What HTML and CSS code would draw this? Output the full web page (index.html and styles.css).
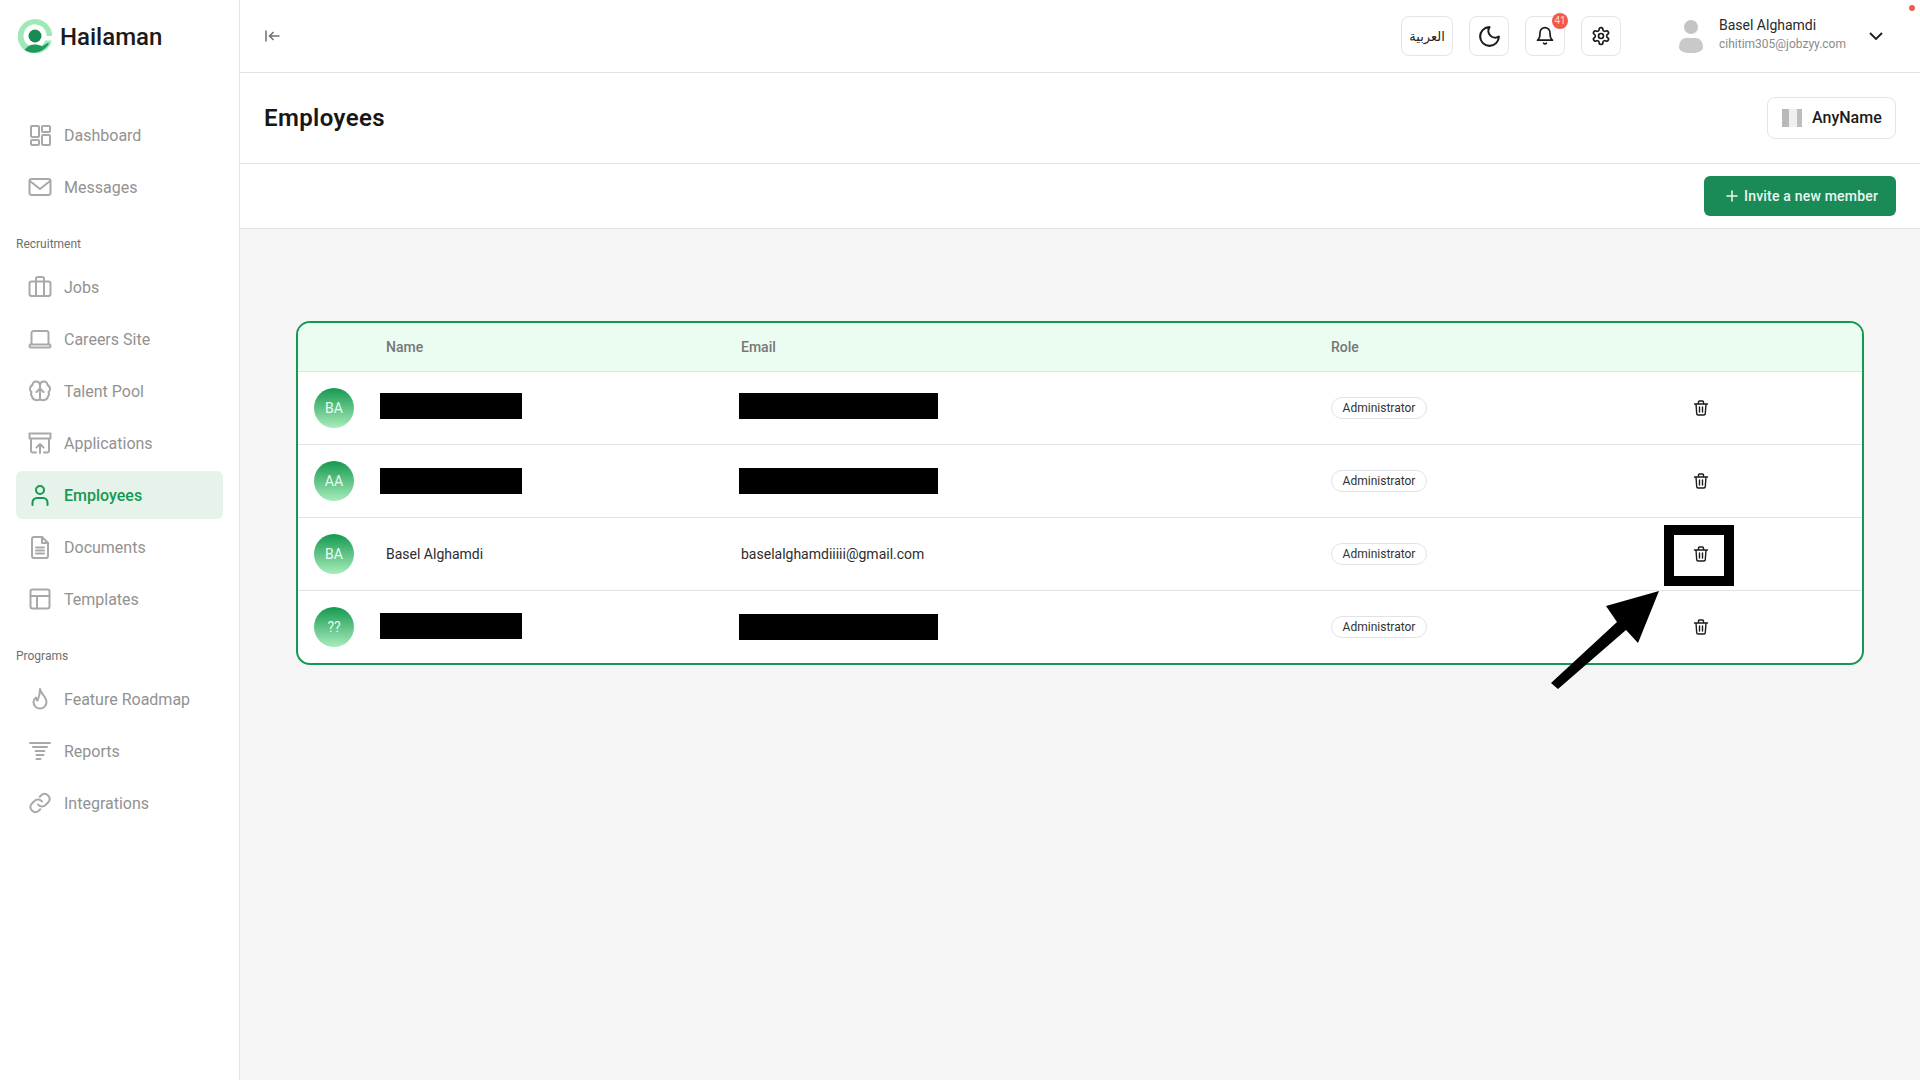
FILE: index.html
```html
<!DOCTYPE html>
<html lang="en">
<head>
<meta charset="utf-8">
<title>Employees</title>
<link rel="stylesheet" href="styles.css">
</head>
<body>
<div class="app">
  <aside class="sidebar">
    <div class="brand">
      <svg class="brand-mark" viewBox="0 0 34 34">
        <path d="M33.800 21.500A17.300 17.300 0 1 1 34.300 17h-5.800A11.500 11.500 0 1 0 27.500 21.500Z" fill="#9fe8b8"/>
        <path d="M6.500 31C10 26.500 13 25.500 17 25.500c2.500 0 5 .6 7 2l5.500-3.500c.5 0 1 .2 1.500.4A17.300 17.300 0 0 1 6.500 31Z" fill="#1f9a5b"/>
        <circle cx="17" cy="17" r="6.500" fill="#1a8a55"/>
      </svg>
      <span class="brand-name">Hailaman</span>
    </div>
    <nav class="nav">
      <a class="nav-item"><svg class="nav-icon" viewBox="0 0 24 24"><rect x="3" y="3" width="8" height="11" rx="1"/><rect x="14" y="3" width="8" height="6" rx="1"/><rect x="14" y="12" width="8" height="10" rx="1"/><rect x="3" y="17" width="8" height="5" rx="1"/></svg>Dashboard</a>
      <a class="nav-item"><svg class="nav-icon" viewBox="0 0 24 24"><rect x="1.500" y="4" width="21" height="16" rx="2"/><path d="m2 6 10 8 10-8"/></svg>Messages</a>
      <div class="nav-label">Recruitment</div>
      <a class="nav-item"><svg class="nav-icon" viewBox="0 0 24 24"><rect x="1.500" y="6.500" width="21" height="14.500" rx="2"/><path d="M8 21V4a2 2 0 0 1 2-2h4a2 2 0 0 1 2 2v17"/></svg>Jobs</a>
      <a class="nav-item"><svg class="nav-icon" viewBox="0 0 24 24"><path d="M3.500 17V6a2 2 0 0 1 2-2h13a2 2 0 0 1 2 2v11"/><path d="M2 17.500h20l.5 2a1 1 0 0 1-1 1h-19a1 1 0 0 1-1-1z"/></svg>Careers Site</a>
      <a class="nav-item"><svg class="nav-icon" viewBox="0 0 24 24"><path d="M12 6V21M12 6a4 4 0 0 0-4-3.500A3.500 3.500 0 0 0 4.500 6 4.500 4.500 0 0 0 2 10c0 1.500.7 2.500 1.500 3A4 4 0 0 0 4 17.500 4.500 4.500 0 0 0 8 21c2 .5 4-.5 4-1.500"/><path d="M12 6a4 4 0 0 1 4-3.500A3.500 3.500 0 0 1 19.500 6 4.500 4.500 0 0 1 22 10c0 1.500-.7 2.500-1.500 3a4 4 0 0 1-.5 4.500 4.500 4.500 0 0 1-4 3.500c-2 .5-4-.5-4-1.500"/><path d="m8.500 13 3.500-3.500 3.500 3.500"/></svg>Talent Pool</a>
      <a class="nav-item"><svg class="nav-icon" viewBox="0 0 24 24"><rect x="1.500" y="2.500" width="21" height="5"/><path d="M8 21.500H5a2 2 0 0 1-2-2V8m18 0v11.500a2 2 0 0 1-2 2h-3M12 22v-9m-3.500 3.500L12 13l3.500 3.500"/></svg>Applications</a>
      <a class="nav-item is-active"><svg class="nav-icon" viewBox="0 0 24 24"><circle cx="12" cy="7" r="4"/><path d="M4.500 22v-2.500a4.500 4.500 0 0 1 4.500-4.500h6a4.500 4.500 0 0 1 4.500 4.500V22"/></svg>Employees</a>
      <a class="nav-item"><svg class="nav-icon" viewBox="0 0 24 24"><path d="M14 2H6a2 2 0 0 0-2 2v17a2 2 0 0 0 2 2h12a2 2 0 0 0 2-2V8z"/><path d="M14 2v6h6M8 12.500h8M8 15.500h8M8 18.500h8"/></svg>Documents</a>
      <a class="nav-item"><svg class="nav-icon" viewBox="0 0 24 24"><rect x="2.500" y="2.500" width="19" height="19" rx="2"/><path d="M2.500 9h19M9 9v12.500"/></svg>Templates</a>
      <div class="nav-label">Programs</div>
      <a class="nav-item"><svg class="nav-icon" viewBox="0 0 24 24"><path d="M12 2c.5 3 2 4.500 4 7 1.500 2 2.500 4 2.500 6a6.500 6.500 0 0 1-13 0c0-2 1-3.500 2.500-4.500 0 1.500.5 2.500 1.500 3 1-2 2.500-6 2.500-11.500z"/></svg>Feature Roadmap</a>
      <a class="nav-item"><svg class="nav-icon" viewBox="0 0 24 24"><path d="M2 4h20M5 8h14M7.500 12h9M8.500 16h7M8.500 20h4"/></svg>Reports</a>
      <a class="nav-item"><svg class="nav-icon" viewBox="0 0 24 24"><path d="M10 13.500a5 5 0 0 0 7.500.5l3-3a5 5 0 0 0-7-7l-1.700 1.700"/><path d="M14 10.500a5 5 0 0 0-7.500-.5l-3 3a5 5 0 0 0 7 7l1.700-1.700"/></svg>Integrations</a>
    </nav>
  </aside>
  <main class="main">
    <header class="topbar">
      <svg class="collapse" viewBox="0 0 15 12"><path d="M1 .5v11M14.500 6H4.500M8.500 2 4.500 6l4 4"/></svg>
      <div class="top-actions">
        <button class="icon-btn lang">العربية</button>
        <button class="icon-btn"><svg class="top-icon large" viewBox="0 0 24 24"><path d="M12 3a6.500 6.500 0 0 0 9 9 9 9 0 1 1-9-9Z"/></svg></button>
        <button class="icon-btn"><svg class="top-icon" viewBox="0 0 24 24"><path d="M6 8a6 6 0 0 1 12 0c0 7 3 9 3 9H3s3-2 3-9"/><path d="M10.300 20.500a2 2 0 0 0 3.400 0"/></svg><span class="count">41</span></button>
        <button class="icon-btn"><svg class="top-icon" viewBox="0 0 24 24"><path d="M12.220 2h-.44a2 2 0 0 0-2 2v.18a2 2 0 0 1-1 1.730l-.43.250a2 2 0 0 1-2 0l-.15-.080a2 2 0 0 0-2.730.730l-.22.380a2 2 0 0 0 .730 2.730l.150.100a2 2 0 0 1 1 1.720v.510a2 2 0 0 1-1 1.740l-.150.090a2 2 0 0 0-.730 2.730l.22.380a2 2 0 0 0 2.730.730l.150-.080a2 2 0 0 1 2 0l.43.250a2 2 0 0 1 1 1.730V20a2 2 0 0 0 2 2h.44a2 2 0 0 0 2-2v-.18a2 2 0 0 1 1-1.730l.43-.250a2 2 0 0 1 2 0l.15.080a2 2 0 0 0 2.730-.730l.22-.390a2 2 0 0 0-.730-2.730l-.150-.080a2 2 0 0 1-1-1.740v-.5a2 2 0 0 1 1-1.740l.150-.090a2 2 0 0 0 .730-2.730l-.22-.380a2 2 0 0 0-2.730-.730l-.150.080a2 2 0 0 1-2 0l-.43-.250a2 2 0 0 1-1-1.730V4a2 2 0 0 0-2-2z"/><circle cx="12" cy="12" r="3"/></svg></button>
      </div>
      <div class="user">
        <svg class="user-pic" viewBox="0 0 24 33"><circle cx="12" cy="7" r="7" fill="#c4c4c4"/><path d="M0 27c0-5 3-9 7-9h10c4 0 7 4 7 9 0 4-5 6-12 6S0 31 0 27Z" fill="#c9c9c9"/></svg>
        <div class="user-text">
          <div class="user-name">Basel Alghamdi</div>
          <div class="user-mail">cihitim305@jobzyy.com</div>
        </div>
        <svg class="chevron" viewBox="0 0 14 8"><path d="m1 1 6 6 6-6"/></svg>
      </div>
      <span class="rec-dot"></span>
    </header>
    <section class="title-row">
      <h1 class="title">Employees</h1>
      <button class="org-btn"><span class="org-thumb"></span>AnyName</button>
    </section>
    <section class="action-row">
      <button class="invite"><svg class="plus" viewBox="0 0 12 12"><path d="M6 .5v11M.5 6h11"/></svg>Invite a new member</button>
    </section>
    <section class="content">
      <div class="card">
        <div class="row head">
          <div></div><div>Name</div><div>Email</div><div>Role</div><div></div>
        </div>
        <div class="row">
          <div class="avatar">BA</div>
          <div><div class="redact redact-name up-2"></div></div>
          <div><div class="redact redact-mail up-2"></div></div>
          <div><span class="role">Administrator</span></div>
          <div><svg class="trash" viewBox="0 0 16 16"><path d="M1.500 4h13M3 4l.7 9.500a1.500 1.500 0 0 0 1.500 1.500h5.600a1.500 1.500 0 0 0 1.500-1.500L13 4M5.500 4V2a1 1 0 0 1 1-1h3a1 1 0 0 1 1 1v2M6.500 7v5M9.500 7v5"/></svg></div>
        </div>
        <div class="row">
          <div class="avatar">AA</div>
          <div><div class="redact redact-name"></div></div>
          <div><div class="redact redact-mail"></div></div>
          <div><span class="role">Administrator</span></div>
          <div><svg class="trash" viewBox="0 0 16 16"><path d="M1.500 4h13M3 4l.7 9.500a1.500 1.500 0 0 0 1.500 1.500h5.600a1.500 1.500 0 0 0 1.500-1.500L13 4M5.500 4V2a1 1 0 0 1 1-1h3a1 1 0 0 1 1 1v2M6.500 7v5M9.500 7v5"/></svg></div>
        </div>
        <div class="row">
          <div class="avatar">BA</div>
          <div>Basel Alghamdi</div>
          <div>baselalghamdiiiii@gmail.com</div>
          <div><span class="role">Administrator</span></div>
          <div><svg class="trash" viewBox="0 0 16 16"><path d="M1.500 4h13M3 4l.7 9.500a1.500 1.500 0 0 0 1.500 1.500h5.600a1.500 1.500 0 0 0 1.500-1.500L13 4M5.500 4V2a1 1 0 0 1 1-1h3a1 1 0 0 1 1 1v2M6.500 7v5M9.500 7v5"/></svg></div>
        </div>
        <div class="row">
          <div class="avatar">??</div>
          <div><div class="redact redact-name up-1"></div></div>
          <div><div class="redact redact-mail"></div></div>
          <div><span class="role">Administrator</span></div>
          <div><svg class="trash" viewBox="0 0 16 16"><path d="M1.500 4h13M3 4l.7 9.500a1.500 1.500 0 0 0 1.500 1.500h5.600a1.500 1.500 0 0 0 1.500-1.500L13 4M5.500 4V2a1 1 0 0 1 1-1h3a1 1 0 0 1 1 1v2M6.500 7v5M9.500 7v5"/></svg></div>
        </div>
      </div>
    </section>
  </main>
</div>
<div class="mark-box"></div>
<svg class="mark-arrow" viewBox="0 0 120 110"><polygon points="6,98 72,37 61,21 114,6 93,58 81,45 13,104"/></svg>
</body>
</html>
```
FILE: styles.css
```css
* { box-sizing: border-box; }
html, body { margin: 0; height: 100%; }
body {
  font-family: Roboto, "Liberation Sans", sans-serif;
  color: #222;
  background: #fff;
  overflow: hidden;
}
button { font: inherit; color: inherit; background: #fff; padding: 0; cursor: pointer; }
.app { display: flex; height: 1080px; }

.sidebar {
  width: 240px;
  flex: none;
  border-right: 1px solid #e4e5e7;
  padding: 0 16px;
}
.brand { display: flex; align-items: center; gap: 8px; height: 72px; padding-left: 2px; }
.brand-mark { width: 34px; height: 34px; }
.brand-name { font-size: 24px; font-weight: 500; color: #1b1b1b; margin-top: 2px; }
.nav { display: flex; flex-direction: column; gap: 4px; margin-top: 39px; }
.nav-item {
  display: flex;
  align-items: center;
  gap: 12px;
  width: 207px;
  height: 48px;
  padding-left: 12px;
  border-radius: 6px;
  font-size: 16px;
  color: #929292;
}
.nav-icon {
  width: 24px;
  height: 24px;
  fill: none;
  stroke: #a9a9a9;
  stroke-width: 2;
  stroke-linecap: round;
  stroke-linejoin: round;
}
.nav-item.is-active { background: #e6f3ea; color: #15994f; font-weight: 500; }
.is-active .nav-icon { stroke: #15994f; }
.nav-label {
  height: 44px;
  padding-top: 21px;
  font-size: 12px;
  line-height: 16px;
  color: #6f6f6f;
}

.main { flex: 1; min-width: 0; display: flex; flex-direction: column; }
.topbar {
  position: relative;
  display: flex;
  align-items: center;
  height: 73px;
  flex: none;
  padding-left: 25px;
  border-bottom: 1px solid #e2e3e6;
}
.collapse { width: 15px; height: 12px; fill: none; stroke: #6f6f6f; stroke-width: 1.500; }
.top-actions { display: flex; gap: 16px; margin-left: auto; }
.icon-btn {
  position: relative;
  display: flex;
  align-items: center;
  justify-content: center;
  width: 40px;
  height: 40px;
  border: 1px solid #e3e4e7;
  border-radius: 8px;
}
.lang { width: 52px; font-size: 13px; font-family: "DejaVu Sans", sans-serif; color: #222; }
.top-icon { width: 20px; height: 20px; fill: none; stroke: #1b1b1b; stroke-width: 2; stroke-linecap: round; stroke-linejoin: round; }
.top-icon.large { width: 25px; height: 25px; }
.count {
  position: absolute;
  top: -4px;
  right: -4px;
  width: 16px;
  height: 16px;
  border-radius: 50%;
  background: #f15a4a;
  color: #ffd9d2;
  font-size: 10px;
  line-height: 16px;
  text-align: center;
}
.user { display: flex; align-items: center; flex: none; margin-left: 58px; width: 241px; }
.user-pic { width: 24px; height: 33px; flex: none; }
.user-text { width: 128px; margin: 0 0 4px 16px; }
.user-name { font-size: 14px; line-height: 18px; color: #2a2a2a; }
.user-mail { font-size: 12px; line-height: 16px; margin-top: 2px; color: #8b8b8b; white-space: nowrap; }
.chevron { width: 14px; height: 8px; fill: none; stroke: #1b1b1b; stroke-width: 1.800; margin-left: 22px; }
.rec-dot {
  position: absolute;
  top: 5px;
  right: 5px;
  width: 6px;
  height: 6px;
  border-radius: 50%;
  background: #f15a4a;
}

.title-row {
  display: flex;
  align-items: center;
  justify-content: space-between;
  height: 91px;
  flex: none;
  padding: 0 24px 0 24px;
  border-bottom: 1px solid #e2e3e6;
}
.title { margin: 0; font-size: 24px; line-height: 32px; font-weight: 600; color: #171717; letter-spacing: .4px; }
.org-btn {
  display: flex;
  align-items: center;
  gap: 10px;
  width: 129px;
  height: 42px;
  padding: 0 0 1px 14px;
  border: 1px solid #e1e5e6;
  border-radius: 8px;
  font-size: 16px;
  font-weight: 500;
  color: #1b1b1b;
}
.org-thumb {
  width: 20px;
  height: 18px;
  background: linear-gradient(90deg, #b9b9b9 0 35%, #f0f0f0 35% 75%, #bdbdbd 75%);
}
.action-row {
  display: flex;
  align-items: center;
  justify-content: flex-end;
  height: 65px;
  flex: none;
  padding-right: 24px;
  background: #fff;
  border-bottom: 1px solid #e2e3e6;
}
.invite {
  display: flex;
  align-items: center;
  width: 192px;
  height: 40px;
  padding-left: 22px;
  gap: 6px;
  border: 0;
  border-radius: 6px;
  background: #1a8a57;
  color: #eaf6ef;
  font-size: 14px;
  font-weight: 500;
  letter-spacing: .2px;
}
.plus { width: 12px; height: 12px; fill: none; stroke: #eaf6ef; stroke-width: 1.500; }

.content { flex: 1; background: #f5f5f5; padding: 92px 56px 0; }
.card {
  border: 2px solid #15994f;
  border-radius: 14px;
  background: #fff;
  overflow: hidden;
}
.row {
  display: grid;
  grid-template-columns: 88px 355px 590px 349px 1fr;
  align-items: center;
  height: 73px;
  border-top: 1px solid #e2e3e6;
  font-size: 14px;
  color: #2d2d2d;
}
.row.head {
  height: 48px;
  border-top: 0;
  background: #ebfcf1;
  color: #777;
  font-weight: 500;
}
.avatar {
  display: flex;
  align-items: center;
  justify-content: center;
  width: 40px;
  height: 40px;
  margin-left: 16px;
  border-radius: 50%;
  background: linear-gradient(180deg, #15994f, #a8ecbb);
  color: #eafbf0;
  font-size: 14px;
}
.redact { height: 26px; background: #000; }
.redact-name { width: 142px; margin-left: -6px; }
.redact-mail { width: 199px; margin-left: -2px; }
.up-2 { margin-bottom: 4px; }
.up-1 { margin-bottom: 2px; }
.role {
  display: inline-block;
  height: 22px;
  width: 96px;
  border: 1px solid #e2e3e6;
  border-radius: 11px;
  font-size: 12px;
  line-height: 20px;
  text-align: center;
  color: #333;
}
.trash {
  display: block;
  width: 16px;
  height: 16px;
  margin-left: 13px;
  fill: none;
  stroke: #1b1b1b;
  stroke-width: 1.400;
  stroke-linecap: round;
  stroke-linejoin: round;
}

.mark-box {
  position: absolute;
  left: 1664px;
  top: 525px;
  width: 70px;
  height: 61px;
  border: 10px solid #000;
}
.mark-arrow {
  position: absolute;
  left: 1545px;
  top: 585px;
  width: 120px;
  height: 110px;
  fill: #000;
}
```
